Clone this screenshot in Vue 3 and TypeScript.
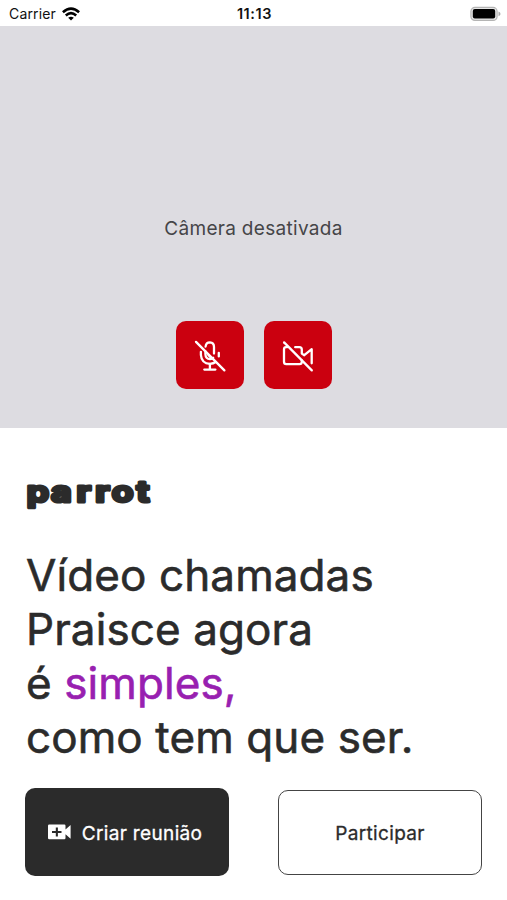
<script setup lang="ts">
import { ref } from 'vue'

const time = ref<string>('11:13')
const carrier = ref<string>('Carrier')
</script>

<template>
  <main class="screen">
    <header class="status">
      <div class="carrier">
        <span>{{ carrier }}</span>
        <svg class="wifi" width="18" height="14" viewBox="0 0 18 14" fill="none" stroke="#000" stroke-width="2.6">
          <path d="M.9 5.2Q9-2 17.1 5.2" />
          <path d="M3.8 8.4Q9 3.9 14.2 8.4" />
          <path d="M9 13.6L6.2 10.8Q9 8.5 11.8 10.8Z" fill="#000" stroke="none" />
        </svg>
      </div>
      <span class="time">{{ time }}</span>
      <svg class="battery" width="31" height="16" viewBox="0 0 31 16">
        <rect x=".9" y="1.4" width="26.2" height="13" rx="4" fill="#e6e6e6" stroke="#b4b4b4" stroke-width="1.2" />
        <rect x="2.8" y="3.1" width="22.4" height="9.5" rx="2" fill="#000" />
        <path d="M28.5 5.6Q30.5 6.4 30.5 7.9T28.5 10.2Z" fill="#aaa" />
      </svg>
    </header>

    <section class="preview">
      <p class="message">Câmera desativada</p>
      <div class="controls">
        <button class="toggle" aria-label="Microfone">
          <svg width="68" height="68" viewBox="0 0 68 68">
            <path d="M20 20.9L48.4 49.4" />
            <path d="M29.6 25.5Q30 21.4 33.9 21.4Q38 21.6 38 26V32.6" />
            <path d="M29.4 30.5V33Q29.6 38 34 38.2Q36.2 38 37.2 36.8" />
            <path d="M24.9 30.8V34Q25.5 42.5 34 42.8Q37.5 42.6 39.6 41" />
            <path d="M42.8 31.8V35.4M33.9 43V48.3M28.3 48.6H39.4M32.4 34L34.5 36.2" />
          </svg>
        </button>
        <button class="toggle" aria-label="Câmera">
          <svg width="68" height="68" viewBox="0 0 68 68">
            <path d="M20.1 21.4L47.8 49.4" />
            <path d="M23.3 26.2H22Q20 26.2 20 28.5V40.8Q20 43.2 22.3 43.2H35.5Q37.8 43.2 37.8 40.8V39.4" />
            <path d="M31.2 26.2H35.3Q37.8 26.2 37.8 28.7V32.6L40.3 34.2L47.7 28.2V42.3" />
          </svg>
        </button>
      </div>
    </section>

    <section class="content">
      <svg class="logo" width="140" height="44" viewBox="0 0 140 44" aria-label="parrot">
        <text transform="scale(1.2 1)" x="1.5 21.7 43 58.5 72.3 93" y="28.3">parrot</text>
      </svg>
      <h1 class="headline">
        <span>Vídeo chamadas</span>
        <span>Praisce agora</span>
        <span>é <em>simples,</em></span>
        <span>como tem que ser.</span>
      </h1>
      <div class="actions">
        <button class="action primary">
          <svg width="23" height="16" viewBox="0 0 23 16">
            <path fill="#fff" fill-rule="evenodd" d="M1.2.5H16.3Q17.5.5 17.5 1.7V5.5L22.6 1V14.8L17.5 10.3V14Q17.5 15.2 16.3 15.2H1.2Q0 15.2 0 14V1.7Q0 .5 1.2.5ZM7.8 3.4V7H4V9H7.8V12.4H9.9V9H13.5V7H9.9V3.4Z" />
          </svg>
          <span>Criar reunião</span>
        </button>
        <button class="action secondary">Participar</button>
      </div>
    </section>
  </main>
</template>

<style>
body {
  background: #fff;
}
</style>

<style scoped>
.screen {
  width: 507px;
  height: 900px;
  overflow: hidden;
  background: #fff;
  color: #2b2b2b;
  font-family: Inter, "Liberation Sans", sans-serif;
}
.status {
  display: grid;
  grid-template-columns: 1fr auto 1fr;
  align-items: center;
  box-sizing: border-box;
  height: 26px;
  padding: 1px 6px 0 9px;
  color: #111;
  font-size: 14px;
}
.carrier {
  display: flex;
  align-items: center;
  gap: 6px;
  letter-spacing: 0.15px;
}
.time {
  margin-right: 1px;
  font-size: 14.5px;
  font-weight: 600;
  letter-spacing: 0.6px;
}
.battery {
  justify-self: end;
}
.preview {
  display: flex;
  flex-direction: column;
  align-items: center;
  box-sizing: border-box;
  height: 402px;
  padding-top: 191px;
  background: #dddce1;
}
.message {
  margin: 0;
  color: #454548;
  font-size: 19px;
  line-height: 24px;
  letter-spacing: 0.3px;
}
.controls {
  display: flex;
  gap: 20px;
  margin-top: 80px;
}
.toggle {
  width: 68px;
  height: 68px;
  padding: 0;
  border: 0;
  border-radius: 10px;
  background: #cb000f;
}
.toggle svg {
  display: block;
  fill: none;
  stroke: #fff;
  stroke-width: 2.3;
  stroke-linecap: round;
  stroke-linejoin: round;
}
.content {
  padding: 46px 25px 0;
}
.logo {
  display: block;
  overflow: visible;
}
.logo text {
  font-family: Inter, sans-serif;
  font-size: 29.5px;
  font-weight: 700;
  fill: #2b2b2b;
  stroke: #2b2b2b;
  stroke-width: 3.2;
  stroke-linejoin: round;
}
.headline {
  display: flex;
  flex-direction: column;
  margin: 30px 0 0 1px;
  font-size: 44px;
  font-weight: 400;
  line-height: 54px;
  letter-spacing: 0.1px;
  white-space: nowrap;
  -webkit-text-stroke: 0.6px currentColor;
}
.headline em {
  color: #9820b0;
  font-style: normal;
}
.actions {
  display: flex;
  align-items: center;
  justify-content: space-between;
  margin-top: 24px;
}
.action {
  display: flex;
  align-items: center;
  justify-content: center;
  box-sizing: border-box;
  width: 204px;
  padding: 2px 0 0;
  border-radius: 10px;
  font-family: inherit;
  font-size: 19px;
  font-weight: 400;
  letter-spacing: 0.35px;
  -webkit-text-stroke: 0.3px currentColor;
}
.primary {
  gap: 11px;
  height: 88px;
  padding-right: 4px;
  border: 0;
  background: #2b2b2b;
  color: #fff;
}
.primary svg {
  margin-top: -2px;
}
.secondary {
  height: 85px;
  border: 1px solid #444;
  background: #fff;
  color: #2b2b2b;
}
</style>
